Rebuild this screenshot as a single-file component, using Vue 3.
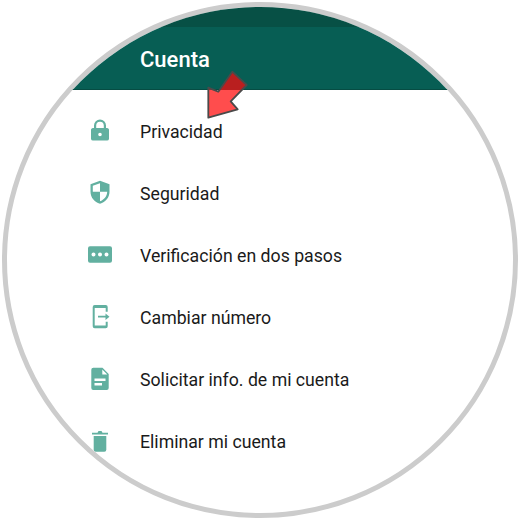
<template>
  <div class="page">
    <div class="lens">
      <div class="status"></div>
      <header class="bar">
        <h1>Cuenta</h1>
      </header>
      <ul class="menu">
        <li v-for="item in items" :key="item.label" class="row">
          <span class="icon">
            <svg width="28" height="28" viewBox="0 0 28 28" v-html="item.icon"></svg>
          </span>
          <span class="label">{{ item.label }}</span>
        </li>
      </ul>
      <svg class="arrow" width="46" height="52" viewBox="0 0 46 52">
        <defs>
          <clipPath id="over-bar"><rect x="0" y="0" width="46" height="20" /></clipPath>
        </defs>
        <path :d="arrowPath" fill="#ff4d4d" />
        <path :d="arrowPath" fill="#b91f1f" clip-path="url(#over-bar)" />
        <path :d="arrowPath" fill="none" stroke="#4a4a4a" stroke-width="1.800" stroke-linejoin="round" />
      </svg>
    </div>
  </div>
</template>

<script setup>
const teal = 'fill="#62b0a0"'

const arrowPath = 'M3.300 47.700V17.700l10 4L27.300 1.700 41.700 15 25.700 31.300l7 8Z'

const items = [
  {
    label: 'Privacidad',
    icon: `<path ${teal} fill-rule="evenodd" d="M8 11V8.500a6 6 0 0 1 12 0V11h1a2 2 0 0 1 2 1.500V22a2 2 0 0 1-2 1.500H7A2 2 0 0 1 5 22v-9.500A2 2 0 0 1 7 11Zm2.200 0h7.600V8.500a3.800 3.800 0 0 0-7.600 0Zm3.800 4.700a1.800 1.800 0 1 0 0 3.600 1.800 1.800 0 0 0 0-3.600Z"/>`
  },
  {
    label: 'Seguridad',
    icon: `<path ${teal} fill-rule="evenodd" d="M14 1.700 23.500 5.200v7.500c0 5.800-4 10.500-9.500 12-5.500-1.500-9.500-6.200-9.500-12V5.200Zm0 2.500L6.800 6.800v6H14Zm0 8.600v9.500c4-1.300 7-5 7.200-9.500Z"/>`
  },
  {
    label: 'Verificación en dos pasos',
    icon: `<path ${teal} fill-rule="evenodd" d="M4 5.300h20a2 2 0 0 1 2 2v12.400a2 2 0 0 1-2 2H4a2 2 0 0 1-2-2V7.300a2 2 0 0 1 2-2Zm3.500 6.200a2 2 0 1 0 0 4 2 2 0 0 0 0-4Zm6.500 0a2 2 0 1 0 0 4 2 2 0 0 0 0-4Zm6.500 0a2 2 0 1 0 0 4 2 2 0 0 0 0-4Z"/>`
  },
  {
    label: 'Cambiar número',
    icon: `<path ${teal} fill-rule="evenodd" d="M8.700 2h11a2 2 0 0 1 2 2v4.700h-2V5H8.700v17.500h11v-3.800h2v4.600a2 2 0 0 1-2 2h-11a2 2 0 0 1-2-2V4a2 2 0 0 1 2-2Z"/><path ${teal} d="M12 12.800h7.500v-2.400l4 3.300-4 3.300v-2.400H12Z"/>`
  },
  {
    label: 'Solicitar info. de mi cuenta',
    icon: `<path ${teal} fill-rule="evenodd" d="M7.300 2.700h9.200l6.200 6.300v14a2 2 0 0 1-2 2H7.300a2 2 0 0 1-2-2V4.700a2 2 0 0 1 2-2Zm9 1.800v5h5ZM8.500 13.500V16h11v-2.500Zm0 4.500v2.500h7.500V18Z"/>`
  },
  {
    label: 'Eliminar mi cuenta',
    icon: `<path ${teal} d="M7.700 9h12.600v13.700a2 2 0 0 1-2 2H9.700a2 2 0 0 1-2-2Z"/><path ${teal} d="M6 5.700h5.500L12.500 4h3l1 1.700H22v1.800H6Z"/>`
  }
]
</script>

<style scoped>
.page {
  width: 520px;
  height: 520px;
  padding: 2px;
  box-sizing: border-box;
  background: #fff;
}

.lens {
  position: relative;
  width: 516px;
  height: 516px;
  box-sizing: border-box;
  border: 5px solid #cccccc;
  border-radius: 50%;
  overflow: hidden;
  background: #fff;
  font-family: Roboto, "Liberation Sans", sans-serif;
}

.status {
  height: 20px;
  background: #075045;
}

.bar {
  height: 63px;
  box-sizing: border-box;
  padding-left: 133px;
  background: #075e54;
  border-bottom: 1px solid #064c43;
  display: flex;
  align-items: center;
}

.bar h1 {
  margin: 3px 0 0;
  color: #fff;
  font-size: 22px;
  font-weight: 500;
  line-height: 26px;
}

.menu {
  list-style: none;
  margin: 0;
  padding: 10px 0 0;
}

.row {
  height: 62px;
  display: flex;
  align-items: center;
}

.icon {
  width: 28px;
  height: 28px;
  margin-left: 79px;
  margin-right: 26px;
}

.icon svg {
  display: block;
}

.label {
  padding-top: 1px;
  color: #1a1a1a;
  font-size: 17.700px;
  line-height: 22px;
}

.arrow {
  position: absolute;
  left: 198px;
  top: 63px;
}
</style>
